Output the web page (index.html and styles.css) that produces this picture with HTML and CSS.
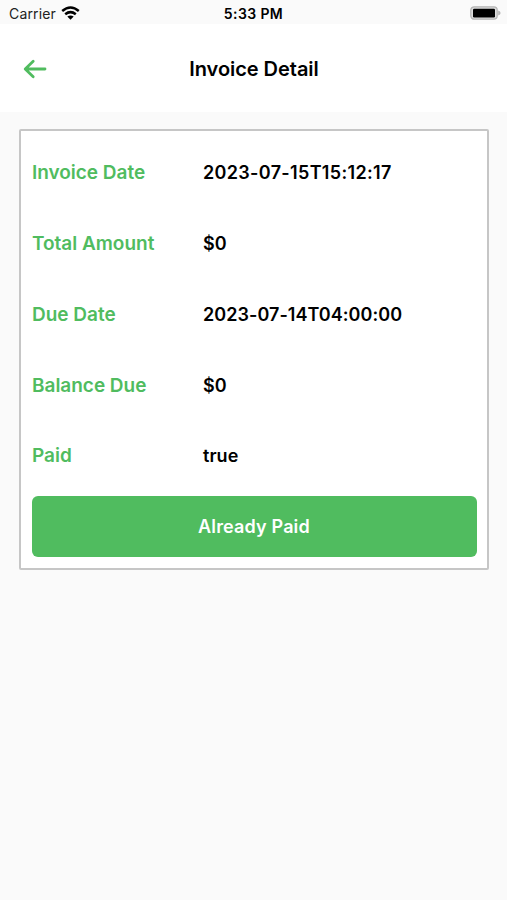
FILE: index.html
```html
<!DOCTYPE html>
<html lang="en">
<head>
<meta charset="utf-8">
<title>Invoice Detail</title>
<link rel="stylesheet" href="styles.css">
</head>
<body>
<header class="top">
  <div class="status">
    <div class="carrier"><span class="carrier-name">Carrier</span>
      <svg class="wifi" width="19" height="14" viewBox="0 0 19 14" fill="none" stroke="#000" stroke-width="2.5"><path d="M1.2 5Q9.5-2 17.8 5M4.2 8.2Q9.5 4 14.8 8.2"/><path d="M6.3 10.5Q9.5 8.3 12.7 10.5L9.5 13.7Z" fill="#000" stroke="none"/></svg>
    </div>
    <div class="time"><span>5:33 PM</span></div>
    <div class="battery"><svg width="31" height="14" viewBox="0 0 31 14"><rect x=".8" y=".8" width="26.4" height="12.4" rx="3.4" fill="#ddd" stroke="#b5b5b5" stroke-width="1.3"/><rect x="3" y="2.8" width="22" height="8.6" rx="1.2"/><path d="M28.2 4.5Q30.6 5.3 30.6 7T28.2 9.5Z" fill="#b5b5b5"/></svg></div>
  </div>
  <div class="nav">
    <svg class="back" width="24" height="20" viewBox="0 0 24 20" fill="none" stroke="#50bc5f" stroke-width="2.8" stroke-linecap="round" stroke-linejoin="round"><path d="M22 10H2.5M10.2 2.2L2.2 10L10.2 17.8"/></svg>
    <h1><span>Invoice Detail</span></h1>
  </div>
</header>
<main class="card">
  <dl>
    <div class="row"><dt><span>Invoice Date</span></dt><dd class="issued"><span>2023-07-15T15:12:17</span></dd></div>
    <div class="row"><dt><span>Total Amount</span></dt><dd><span>$0</span></dd></div>
    <div class="row"><dt><span>Due Date</span></dt><dd><span>2023-07-14T04:00:00</span></dd></div>
    <div class="row"><dt><span>Balance Due</span></dt><dd><span>$0</span></dd></div>
    <div class="row"><dt><span>Paid</span></dt><dd><span>true</span></dd></div>
  </dl>
  <button class="paid"><span>Already Paid</span></button>
</main>
</body>
</html>
```
FILE: styles.css
```css
* { box-sizing: border-box; }
body { margin: 0; min-height: 900px; background: #fafafa; color: #000; font-family: Inter, sans-serif; }
.top { height: 112px; background: #fff; }
.status { height: 24px; padding-top: 3px; display: grid; grid-template-columns: 1fr auto 1fr; align-items: center; background: #fafafa; font-size: 14px; }
.carrier { display: flex; align-items: center; gap: 5px; padding-left: 9px; color: #222; letter-spacing: .15px; }
.wifi { margin-top: -2px; }
.time { font-weight: 600; letter-spacing: .4px; }
.battery { display: flex; justify-content: flex-end; padding-right: 6px; margin-top: -1px; }
.nav { height: 90px; display: grid; grid-template-columns: 60px 1fr 60px; align-items: center; }
.back { margin-left: 23px; }
h1 { margin: 0 0 0 1px; text-align: center; font-size: 20px; font-weight: 600; letter-spacing: -.05px; }
.card { width: 470px; height: 441px; margin: 17px 0 0 19px; padding: 6px 11px 11px; border: 2px solid #c6c6c6; border-radius: 2px; background: #fff; }
dl { margin: 0; }
.row { height: 70.87px; display: grid; grid-template-columns: 171px 1fr; align-items: center; font-size: 19px; }
dt { color: #50bc5f; font-weight: 600; letter-spacing: -.02px; }
dd { margin: 0; font-size: 18px; font-weight: 600; letter-spacing: .05px; }
.issued { letter-spacing: .33px; }
.paid { width: 445px; height: 61px; display: block; margin: 4.65px 0 0 -.5px; border: 0; border-radius: 6px; background: #50bc5f; color: #fff; font: 600 18px Inter, sans-serif; letter-spacing: .15px; }
```
